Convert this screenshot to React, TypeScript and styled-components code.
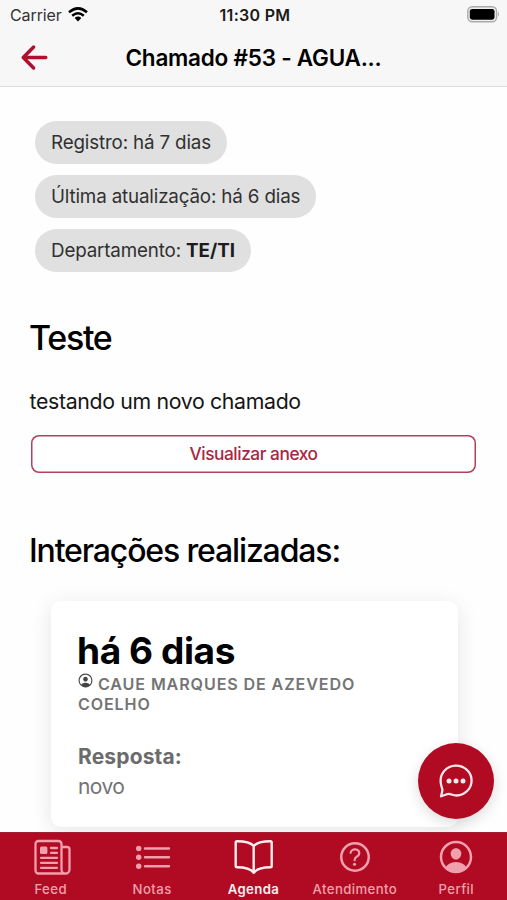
import React from "react";
import styled, { createGlobalStyle } from "styled-components";
import {
  IoArrowBackOutline,
  IoHelpCircleOutline,
  IoPersonCircleOutline,
} from "react-icons/io5";

const GlobalStyle = createGlobalStyle`
  * { box-sizing: border-box; }
  body {
    margin: 0;
    background: #fff;
    color: #000;
    font-family: Inter, "Liberation Sans", sans-serif;
  }
  h1, h2, h3, p { margin: 0; }
`;

const Screen = styled.div`
  position: relative;
  display: flex;
  flex-direction: column;
  width: 507px;
  height: 900px;
  overflow: hidden;
  background: #fefefe;
`;

const Header = styled.header`
  flex: none;
  height: 87px;
  background: #f7f7f7;
  border-bottom: 1px solid #dcdcdc;
`;

const StatusBar = styled.div`
  display: grid;
  grid-template-columns: 1fr auto 1fr;
  align-items: center;
  height: 29px;
  padding: 0 7px 0 10px;
`;

const Carrier = styled.div`
  display: flex;
  align-items: center;
  gap: 6px;
  font-size: 16px;
  letter-spacing: -0.1px;
  color: #333;
`;

const Clock = styled.div`
  font-size: 16px;
  font-weight: 600;
  letter-spacing: 0.3px;
  color: #1a1a1a;
`;

const BatterySlot = styled.div`
  display: flex;
  justify-content: flex-end;
`;

const TitleBar = styled.div`
  display: grid;
  grid-template-columns: 60px 1fr 60px;
  align-items: center;
  height: 57px;
`;

const BackButton = styled.button`
  display: flex;
  padding: 0;
  margin-left: 16px;
  border: 0;
  background: none;
  color: #b01030;
  font-size: 37px;
`;

const Title = styled.h1`
  text-align: center;
  font-size: 22.5px;
  font-weight: 600;
  letter-spacing: -0.24px;
  white-space: nowrap;
`;

const Content = styled.main`
  flex: 1;
  min-height: 0;
  overflow: hidden;
  padding: 34px 30px 0;
`;

const Chips = styled.div`
  display: flex;
  flex-direction: column;
  align-items: flex-start;
  gap: 11px;
  padding-left: 5px;
`;

const Chip = styled.div`
  display: flex;
  align-items: center;
  height: 43px;
  padding: 0 16px;
  border-radius: 22px;
  background: #e0e0e0;
  color: #303030;
  font-size: 18.8px;
  letter-spacing: -0.16px;
  white-space: pre;

  strong {
    font-weight: 700;
    letter-spacing: 0;
    color: #1c1c1c;
  }
`;

const Heading = styled.h2<{ $top: number; $size: number; $tracking: number }>`
  margin: ${(p) => p.$top}px 0 0 -1px;
  font-size: ${(p) => p.$size}px;
  line-height: 42px;
  font-weight: 500;
  letter-spacing: ${(p) => p.$tracking}px;
  white-space: nowrap;
`;

const Description = styled.p`
  margin: 28px 0 0 -0.5px;
  font-size: 21.3px;
  line-height: 28px;
  letter-spacing: -0.34px;
  color: #151515;
`;

const AttachmentButton = styled.button`
  display: block;
  width: 445px;
  height: 38px;
  margin: 20px 0 0 1px;
  padding: 0 0 1px;
  border: 0;
  border-radius: 8px;
  box-shadow: inset 0 0 0 1.5px #b4405a;
  background: #fff;
  color: #a92743;
  font: 500 17.3px Inter, sans-serif;
  letter-spacing: -0.45px;
`;

const Card = styled.article`
  width: 407px;
  height: 226px;
  margin: 29px 0 0 21px;
  padding: 30px 27px 0;
  border-radius: 10px;
  background: #fff;
  box-shadow: 0 4px 21px rgba(0, 0, 0, 0.1);
`;

const CardTitle = styled.h3`
  margin-left: -1px;
  font-size: 37px;
  line-height: 40px;
  font-weight: 700;
  letter-spacing: -0.4px;
`;

const Author = styled.p`
  margin-top: 1px;
  font-size: 16.1px;
  line-height: 20px;
  font-weight: 600;
  letter-spacing: 0.88px;
  color: #747474;

  svg {
    margin-right: 4px;
    margin-left: -1px;
    font-size: 17px;
    vertical-align: 1px;
    color: #444;
  }
`;

const Answer = styled.div`
  margin-top: 28px;
  font-size: 21px;
  line-height: 30px;
  letter-spacing: -0.6px;
  color: #737373;

  strong {
    display: block;
    font-weight: 700;
    letter-spacing: 0.15px;
    color: #6b6b6b;
  }
`;

const Fab = styled.button`
  position: absolute;
  right: 13px;
  bottom: 81px;
  display: flex;
  align-items: center;
  justify-content: center;
  width: 76px;
  height: 76px;
  padding: 0;
  border: 0;
  border-radius: 50%;
  background: #b00b23;
  box-shadow: 0 4px 14px rgba(0, 0, 0, 0.14);
  color: #fbe6ea;
`;

const TabBar = styled.nav`
  z-index: 1;
  flex: none;
  display: grid;
  grid-template-columns: repeat(5, 1fr);
  height: 68px;
  border-top: 1px solid #9f2137;
  background: #b00b23;
`;

const Tab = styled.div<{ $active?: boolean }>`
  display: flex;
  flex-direction: column;
  align-items: center;
  padding-top: 4px;
  color: ${(p) => (p.$active ? "#ffeef0" : "#f0a0ac")};
  font-size: 13.2px;
  font-weight: ${(p) => (p.$active ? 600 : 500)};
  line-height: 18px;
  letter-spacing: 0.4px;

  svg {
    flex: none;
    width: 40px;
    height: 40px;
    margin-bottom: 3px;
  }
`;

const lineProps = {
  fill: "none",
  stroke: "currentColor",
  strokeLinecap: "round",
  strokeLinejoin: "round",
} as const;

const NewspaperIcon = () => (
  <svg viewBox="0 0 40 40" {...lineProps} strokeWidth="2.3">
    <path d="M34.5 36.5H7.5a3 3 0 0 1-3-3V7a3 3 0 0 1 3-3h20a3 3 0 0 1 3 3v25.5a4 4 0 0 0 8 0V12.5a2.5 2.5 0 0 0-2.5-2.5h-5.5" />
    <path d="M20 11h6M20 15.8h6M10 20.8h16M10 25.8h16M10 30.8h16" />
    <rect x="9" y="9.5" width="7.4" height="7.4" rx="1.5" fill="currentColor" stroke="none" />
  </svg>
);

const ListIcon = () => (
  <svg viewBox="0 0 40 40" {...lineProps} strokeWidth="2.4">
    <path d="M13 11.5h24M13 20.3h24M13 29.2h24" />
    <g fill="currentColor" stroke="none">
      <circle cx="6.7" cy="11.5" r="2.7" />
      <circle cx="6.7" cy="20.3" r="2.7" />
      <circle cx="6.7" cy="29.2" r="2.7" />
    </g>
  </svg>
);

const BookIcon = () => (
  <svg viewBox="0 0 40 40" {...lineProps} strokeWidth="2.4">
    <path d="M20.7 9C18 6 13 4.300 4 4.300Q2.700 4.300 2.700 5.600V29q0 1.300 1.300 1.300C13 30.300 18 32.300 20.700 35.800 23.400 32.300 28.400 30.300 37.400 30.300Q38.700 30.300 38.700 29V5.600Q38.700 4.300 37.400 4.300C28.400 4.300 23.400 6 20.700 9v26.500" />
  </svg>
);

const ChatIcon = () => (
  <svg width="38" height="38" viewBox="0 0 38 38" {...lineProps} strokeWidth="2.3">
    <path d="M4 34.3C4.6 31.8 5.400 29.600 5.400 27.800 5.400 26.300 3.600 23.500 3.600 19.300A15.500 14.900 0 1 1 19.500 33.500C16 33.500 13.800 31.800 11.800 31.800 9.800 31.800 7 33.600 4 34.300Z" />
    <g fill="currentColor" stroke="none">
      <circle cx="12" cy="19" r="2.5" />
      <circle cx="19" cy="19" r="2.5" />
      <circle cx="26" cy="19" r="2.5" />
    </g>
  </svg>
);

const WifiIcon = () => (
  <svg width="20" height="15" viewBox="0 0 20 15">
    <g fill="none" stroke="#000" strokeWidth="2.5">
      <path d="M1 5.3Q10-2.6 19 5.3" />
      <path d="M4.2 8.8Q10 3.8 15.8 8.8" />
    </g>
    <path d="M6.7 11Q10 8.2 13.3 11L10 14.4Z" />
  </svg>
);

const BatteryIcon = () => (
  <svg width="33" height="17" viewBox="0 0 33 17">
    <rect x=".8" y=".8" width="28.8" height="15" rx="4.5" fill="#eee" stroke="#ababab" strokeWidth="1.4" />
    <rect x="2.8" y="2.9" width="24.7" height="10.8" rx="2.4" />
    <path d="M31 5.8Q33 8.3 31 10.8Z" fill="#aaa" />
  </svg>
);

const tabs = [
  { label: "Feed", Icon: NewspaperIcon },
  { label: "Notas", Icon: ListIcon },
  { label: "Agenda", Icon: BookIcon, active: true },
  { label: "Atendimento", Icon: IoHelpCircleOutline },
  { label: "Perfil", Icon: IoPersonCircleOutline },
];

export default function App() {
  return (
    <Screen>
      <GlobalStyle />
      <Header>
        <StatusBar>
          <Carrier>
            Carrier <WifiIcon />
          </Carrier>
          <Clock>11:30 PM</Clock>
          <BatterySlot>
            <BatteryIcon />
          </BatterySlot>
        </StatusBar>
        <TitleBar>
          <BackButton aria-label="Voltar">
            <IoArrowBackOutline />
          </BackButton>
          <Title>Chamado #53 - AGUA...</Title>
        </TitleBar>
      </Header>
      <Content>
        <Chips>
          <Chip>Registro: há 7 dias</Chip>
          <Chip>Última atualização: há 6 dias</Chip>
          <Chip>
            Departamento: <strong>TE/TI</strong>
          </Chip>
        </Chips>
        <Heading $top={45} $size={34} $tracking={-1.3}>
          Teste
        </Heading>
        <Description>testando um novo chamado</Description>
        <AttachmentButton>Visualizar anexo</AttachmentButton>
        <Heading $top={57} $size={32} $tracking={-1.15}>
          Interações realizadas:
        </Heading>
        <Card>
          <CardTitle>há 6 dias</CardTitle>
          <Author>
            <IoPersonCircleOutline />
            CAUE MARQUES DE AZEVEDO COELHO
          </Author>
          <Answer>
            <strong>Resposta:</strong>
            novo
          </Answer>
        </Card>
      </Content>
      <Fab aria-label="Responder">
        <ChatIcon />
      </Fab>
      <TabBar>
        {tabs.map(({ label, Icon, active }) => (
          <Tab key={label} $active={active}>
            <Icon />
            {label}
          </Tab>
        ))}
      </TabBar>
    </Screen>
  );
}
